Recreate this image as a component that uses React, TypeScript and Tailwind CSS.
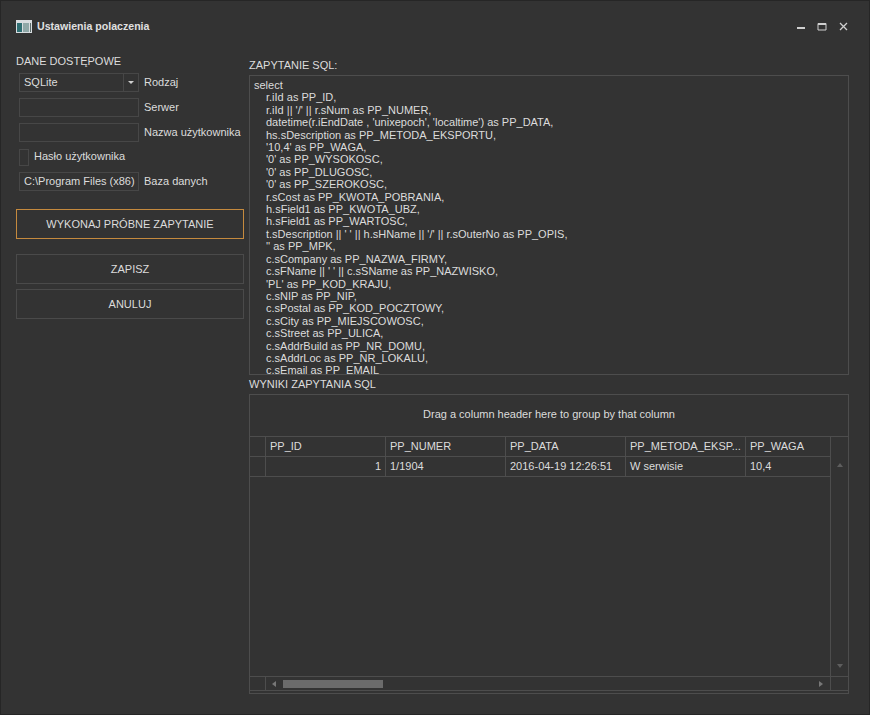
const sql = [
  "r.iId as PP_ID,",
  "r.iId || '/' || r.sNum as PP_NUMER,",
  "datetime(r.iEndDate , 'unixepoch', 'localtime') as PP_DATA,",
  "hs.sDescription as PP_METODA_EKSPORTU,",
  "'10,4' as PP_WAGA,",
  "'0' as PP_WYSOKOSC,",
  "'0' as PP_DLUGOSC,",
  "'0' as PP_SZEROKOSC,",
  "r.sCost as PP_KWOTA_POBRANIA,",
  "h.sField1 as PP_KWOTA_UBZ,",
  "h.sField1 as PP_WARTOSC,",
  "t.sDescription || ' ' || h.sHName || '/' || r.sOuterNo as PP_OPIS,",
  "'' as PP_MPK,",
  "c.sCompany as PP_NAZWA_FIRMY,",
  "c.sFName || ' ' || c.sSName as PP_NAZWISKO,",
  "'PL' as PP_KOD_KRAJU,",
  "c.sNIP as PP_NIP,",
  "c.sPostal as PP_KOD_POCZTOWY,",
  "c.sCity as PP_MIEJSCOWOSC,",
  "c.sStreet as PP_ULICA,",
  "c.sAddrBuild as PP_NR_DOMU,",
  "c.sAddrLoc as PP_NR_LOKALU,",
  "c.sEmail as PP_EMAIL",
];

const cols = ["PP_ID", "PP_NUMER", "PP_DATA", "PP_METODA_EKSP...", "PP_WAGA"];

function Row({ label, children }: { label: string; children: React.ReactNode }) {
  return (
    <div className="flex h-[25px] items-center">
      {children}
      <span className="ml-[5px] whitespace-nowrap">{label}</span>
    </div>
  );
}

function Field({ value = "" }: { value?: string }) {
  return (
    <div className="flex h-[19px] w-[120px] shrink-0 items-center overflow-hidden border border-[#474747] px-1 whitespace-nowrap">
      {value}
    </div>
  );
}

function Btn({ label, active }: { label: string; active?: boolean }) {
  return (
    <div className={`flex h-[30px] w-[228px] items-center justify-center border ${active ? "border-[#c58a3e]" : "border-[#4a4a4a]"}`}>
      {label}
    </div>
  );
}

export default function App() {
  return (
    <div className="flex h-[715px] w-[870px] flex-col overflow-hidden border border-[#262626] bg-[#333333] font-[Liberation_Sans,Arial,sans-serif] text-[11px] text-[#dcdcdc]">
      <div className="flex h-[49px] shrink-0 items-center pt-[1px] pl-[15px]">
        <svg width="16" height="13" viewBox="0 0 16 13" className="mr-[5px]">
          <rect width="16" height="13" fill="#d8dde0" />
          <rect x="1" y="3" width="5" height="9" fill="#2f6f73" />
          <rect x="7" y="3" width="6" height="9" fill="#8fa8a8" />
          <rect x="14" y="3" width="1" height="9" fill="#5b6a6a" />
        </svg>
        <span className="translate-y-px text-[10.6px] font-bold text-[#e0e0e0]">Ustawienia polaczenia</span>
        <div className="ml-auto flex items-center gap-[12px] pr-[21px]">
          <svg width="9" height="9" viewBox="0 0 9 9"><rect x="1" y="5" width="8" height="2" fill="#d0d0d0" /></svg>
          <svg width="10" height="9" viewBox="0 0 10 9"><path d="M1 1.5H9V8H1Z" fill="none" stroke="#d0d0d0" /><rect x="1" y="1" width="8" height="2" fill="#d0d0d0" /></svg>
          <svg width="9" height="9" viewBox="0 0 9 9"><path d="M1 1L8 8M8 1L1 8" stroke="#d0d0d0" strokeWidth="1.3" /></svg>
        </div>
      </div>

      <div className="flex min-h-0 flex-1">
        <div className="w-[248px] shrink-0 pl-[15px]">
          <div className="h-[20px] pt-[4px] leading-[14px]">DANE DOSTĘPOWE</div>
          <div className="pl-[3px]">
            <Row label="Rodzaj">
              <div className="flex h-[19px] w-[120px] shrink-0 items-center border border-[#474747]">
                <span className="flex-1 pl-1">SQLite</span>
                <span className="flex h-full w-[15px] items-center justify-center border-l border-[#474747]">
                  <svg width="6" height="3" viewBox="0 0 6 3"><path d="M0 0H6L3 3Z" fill="#d0d0d0" /></svg>
                </span>
              </div>
            </Row>
            <Row label="Serwer"><Field /></Row>
            <Row label="Nazwa użytkownika"><Field /></Row>
            <div className="flex h-[24px] items-center">
              <div className="h-[17px] w-[10px] shrink-0 border border-[#474747]" />
              <span className="ml-[5px] -translate-y-px">Hasło użytkownika</span>
            </div>
            <Row label="Baza danych"><Field value="C:\Program Files (x86)" /></Row>
          </div>
          <div className="mt-[15px] flex flex-col">
            <Btn label="WYKONAJ PRÓBNE ZAPYTANIE" active />
            <div className="mt-[15px] flex flex-col gap-[5px]">
              <Btn label="ZAPISZ" />
              <Btn label="ANULUJ" />
            </div>
          </div>
        </div>

        <div className="w-[600px] shrink-0">
          <div className="flex h-[25px] items-end pb-[3px] leading-[14px]">ZAPYTANIE SQL:</div>
          <div className="h-[300px] overflow-hidden border border-[#4d4d4d] pt-[3px] pl-[4px]">
            <div className="leading-[12.4px] whitespace-pre">select</div>
            {sql.map((l) => (
              <div key={l} className="pl-[12px] leading-[12.4px] whitespace-pre">{l}</div>
            ))}
          </div>
          <div className="flex h-[19px] items-center pb-[2px] leading-[14px]">WYNIKI ZAPYTANIA SQL</div>
          <div className="flex h-[300px] flex-col border border-[#4d4d4d]">
            <div className="flex h-[41px] shrink-0 items-center justify-center pb-[3px]">Drag a column header here to group by that column</div>
            <div className="flex min-h-0 flex-1">
              <div className="flex min-w-0 flex-1 flex-col">
                <div className="grid h-[21px] shrink-0 grid-cols-[15px_120px_120px_120px_120px_86px] border-y border-[#4d4d4d] leading-[19px]">
                  <div />
                  {cols.map((c) => (
                    <div key={c} className="overflow-hidden border-l border-[#4d4d4d] pl-1 whitespace-nowrap">{c}</div>
                  ))}
                </div>
                <div className="grid h-[20px] shrink-0 grid-cols-[15px_120px_120px_120px_120px_86px] border-b border-[#4d4d4d] leading-[19px]">
                  <div />
                  <div className="border-l border-[#4d4d4d] pr-1 text-right">1</div>
                  <div className="border-l border-[#4d4d4d] pl-1">1/1904</div>
                  <div className="border-l border-[#4d4d4d] pl-1">2016-04-19 12:26:51</div>
                  <div className="border-l border-[#4d4d4d] pl-1">W serwisie</div>
                  <div className="border-l border-[#4d4d4d] pl-1">10,4</div>
                </div>
              </div>
              <div className="flex w-[18px] shrink-0 flex-col items-center justify-between border-t border-l border-[#4d4d4d] pt-[26px] pb-[8px]">
                <svg width="6" height="4" viewBox="0 0 6 4"><path d="M0 4H6L3 0Z" fill="#5e5e5e" /></svg>
                <svg width="6" height="4" viewBox="0 0 6 4"><path d="M0 0H6L3 4Z" fill="#5e5e5e" /></svg>
              </div>
            </div>
            <div className="mb-[2px] flex h-[15px] shrink-0 border-y border-[#4d4d4d] pl-[15px]">
              <div className="flex h-full w-[566px] items-center border-l border-[#4d4d4d]">
                <svg width="4" height="6" viewBox="0 0 4 6" className="ml-[6px]"><path d="M4 0V6L0 3Z" fill="#777777" /></svg>
                <div className="ml-[7px] h-[8px] w-[100px] bg-[#6b6b6b]" />
                <svg width="4" height="6" viewBox="0 0 4 6" className="mr-[7px] ml-auto"><path d="M0 0V6L4 3Z" fill="#777777" /></svg>
              </div>
              <div className="h-full w-[18px] border-l border-[#4d4d4d]" />
            </div>
          </div>
        </div>
      </div>
    </div>
  );
}
